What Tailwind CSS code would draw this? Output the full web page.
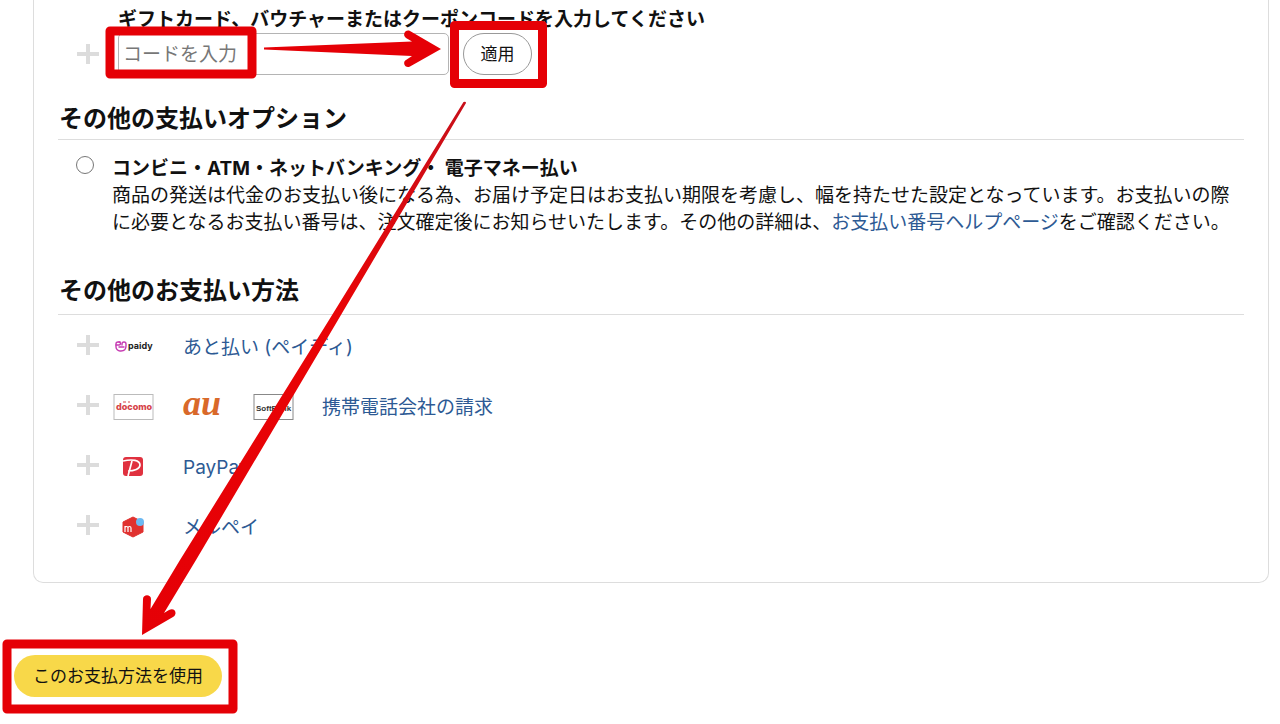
<!DOCTYPE html>
<html lang="ja">
<head>
  <meta charset="UTF-8">
  <meta name="viewport" content="width=device-width, initial-scale=1.0">
  <title>お支払い方法</title>
  <script src="https://cdn.jsdelivr.net/npm/@tailwindcss/browser@4"></script>
</head>
<body class="relative bg-white text-[#111] text-[19px] leading-[27px] font-['Inter','Noto_Sans_CJK_JP',sans-serif]">
  <main class="pb-[27px]">
    <section class="ml-[33px] mr-[11px] px-6 pt-[6px] pb-[25px] border border-t-0 border-[#dddddd] rounded-b-[10px]">

      <!-- gift card -->
      <form class="pl-[18px]">
        <label for="code" class="block pl-[42px] font-bold">ギフトカード、バウチャーまたはクーポンコードを入力してください</label>
        <div class="flex items-center">
          <button type="button" aria-label="追加" class="w-[42px]">
            <svg class="w-6 h-6" viewBox="0 0 24 24" stroke="#dcdcdc" stroke-width="4"><path d="M12 2v20M1 12h22"/></svg>
          </button>
          <input type="text" id="code" placeholder="コードを入力" class="w-[331px] h-[42px] px-1 border border-[#b4b4b4] rounded-[5px] placeholder:text-[#777]">
          <button type="button" class="ml-[14px] w-[69px] h-[42px] border border-[#999] rounded-full text-[17px]">適用</button>
        </div>
      </form>

      <h2 class="mt-7 pl-px pb-1 border-b border-[#dddddd] text-2xl font-bold">その他の支払いオプション</h2>
      <div class="flex pl-[18px] pr-1 mt-[15px]">
        <input type="radio" id="konbini" name="payment" class="appearance-none shrink-0 w-[18px] h-[18px] mt-px mr-[18px] border border-[#777] rounded-full">
        <div>
          <label for="konbini" class="font-bold block">コンビニ・ATM・ネットバンキング・ 電子マネー払い</label>
          <p>商品の発送は代金のお支払い後になる為、お届け予定日はお支払い期限を考慮し、幅を持たせた設定となっています。お支払いの際に必要となるお支払い番号は、注文確定後にお知らせいたします。その他の詳細は、<a href="#" class="text-[#2d5a94]">お支払い番号ヘルプページ</a>をご確認ください。</p>
        </div>
      </div>

      <h2 class="mt-[39px] pl-px pb-[7px] border-b border-[#dddddd] text-2xl font-bold">その他のお支払い方法</h2>
      <ul class="pl-[18px] pt-[2px]">
        <li class="flex items-center h-[60px]">
          <button type="button" aria-label="追加" class="w-[37px]">
            <svg class="w-6 h-6" viewBox="0 0 24 24" stroke="#dcdcdc" stroke-width="4"><path d="M12 0v20M1 10h22"/></svg>
          </button>
          <svg class="w-[42px] h-[28px]" viewBox="0 0 42 28">
            <g fill="none" stroke="#c63bb2" stroke-width="1.4" stroke-linecap="round">
              <path d="M7 9H5a2 2 0 0 0-2 2v3c0 2 2 4 4 4h1c3 0 5-2 5-5v-2a2 2 0 0 0-4 0v1"/>
              <path d="M3 12h3a1 1 0 0 0 0-3M6 14h5"/>
            </g>
            <text x="15" y="16" font-size="9" font-weight="700" fill="#222">paidy</text>
          </svg>
          <a href="#" class="ml-[28px] text-[#2d5a94]">あと払い (ペイディ)</a>
        </li>
        <li class="flex items-center h-[60px]">
          <button type="button" aria-label="追加" class="w-[37px]">
            <svg class="w-6 h-6" viewBox="0 0 24 24" stroke="#dcdcdc" stroke-width="4"><path d="M12 0v20M1 10h22"/></svg>
          </button>
          <svg class="w-[42px] h-[28px]" viewBox="0 0 42 28">
            <rect x="1" y="1.5" width="39" height="25" fill="#fff" stroke="#bbb"/>
            <text x="3" y="17" font-size="9" font-weight="800" fill="#d6434a">docomo</text>
            <path d="M10 9h3M15 9h2" stroke="#d6434a"/>
          </svg>
          <svg class="ml-[28px] w-[42px] h-[28px] overflow-visible" viewBox="0 0 42 28">
            <text x="0" y="22" font-size="36" font-weight="700" font-style="italic" font-family="Liberation Serif" fill="#d9692a">au</text>
          </svg>
          <svg class="ml-[28px] w-[42px] h-[28px]" viewBox="0 0 42 28">
            <rect x="1" y="1.5" width="39" height="25" fill="#fff" stroke="#888"/>
            <text x="3" y="18" font-size="8" font-weight="700" font-family="Liberation Sans" fill="#333">SoftBank</text>
          </svg>
          <a href="#" class="ml-[27px] text-[#2d5a94]">携帯電話会社の請求</a>
        </li>
        <li class="flex items-center h-[60px]">
          <button type="button" aria-label="追加" class="w-[37px]">
            <svg class="w-6 h-6" viewBox="0 0 24 24" stroke="#dcdcdc" stroke-width="4"><path d="M12 0v20M1 10h22"/></svg>
          </button>
          <svg class="w-[42px] h-[28px]" viewBox="0 0 42 28">
            <rect x="10" y="4" width="20" height="19" rx="3" fill="#e0313f"/>
            <path d="M10 8c9-2 17-1 17 4 0 4-6 6-12 6M19 8l-4 15" fill="none" stroke="#fff" stroke-width="1.7"/>
          </svg>
          <a href="#" class="ml-[28px] text-[#2d5a94]">PayPay</a>
        </li>
        <li class="flex items-center h-[60px]">
          <button type="button" aria-label="追加" class="w-[37px]">
            <svg class="w-6 h-6" viewBox="0 0 24 24" stroke="#dcdcdc" stroke-width="4"><path d="M12 0v20M1 10h22"/></svg>
          </button>
          <svg class="w-[42px] h-[28px]" viewBox="0 0 42 28">
            <path d="M20 4l10 5v10l-10 5-10-5V9z" fill="#e0312f" stroke="#e0312f" stroke-linejoin="round"/>
            <circle cx="27" cy="9" r="4" fill="#6cb9f2"/>
            <path d="M12 19v-6M12 15c0-2 3-2 3 0v4M15 15c0-2 3-2 3 0v4" fill="none" stroke="#fff" stroke-width="1.2"/>
          </svg>
          <a href="#" class="ml-[28px] text-[#2d5a94]">メルペイ</a>
        </li>
      </ul>
    </section>

    <button type="button" class="block mt-[72px] ml-[14px] w-[208px] h-[42px] rounded-full bg-[#f8d849] text-[17px]">このお支払方法を使用</button>
  </main>

  <!-- callout boxes and arrows -->
  <svg class="absolute top-0 left-0 w-[1280px] h-[720px] pointer-events-none" viewBox="0 0 1280 720" aria-hidden="true">
    <defs>
      <linearGradient id="red" x1="0" y1="0" x2="0" y2="1">
        <stop offset="0" stop-color="#c8101a"/>
        <stop offset="0.4" stop-color="#e90406"/>
        <stop offset="1" stop-color="#e50006"/>
      </linearGradient>
    </defs>
    <g fill="none" stroke="#e50006" stroke-width="9" stroke-linejoin="round">
      <rect x="110" y="31" width="142" height="43"/>
      <rect x="454.5" y="25.5" width="88" height="58"/>
      <rect x="7" y="644" width="226" height="65"/>
    </g>
    <path fill="#e50006" d="M264 47.5L412 41.5 406 38C402 35 405 29 410 31L441 49 410 66.5C405 69 402 62 406 60L412 56 264 49.5z"/>
    <path fill="url(#red)" d="M463.5 102Q466 101 466 103L338 320 196 560 164 613 169 610C175 607 178 614 173 617L142 635 143 599C143 594 151 594 151 599L150.5 609 180 560 329 320z"/>
  </svg>
</body>
</html>
